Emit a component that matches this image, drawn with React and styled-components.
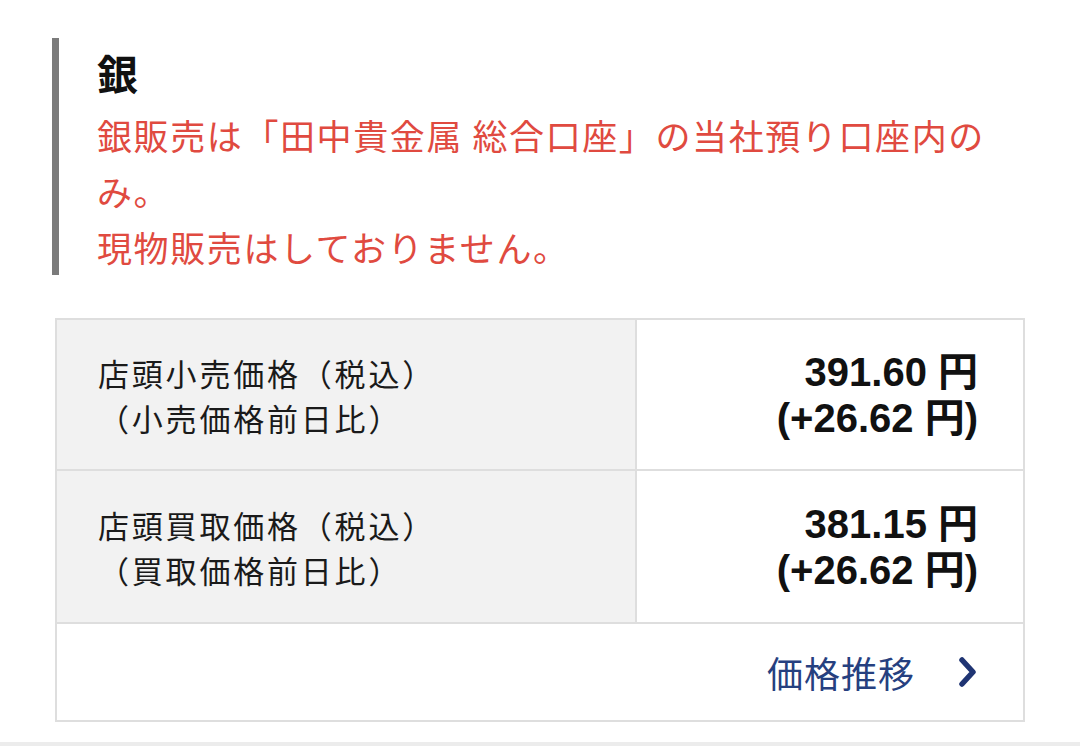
import React from 'react';
import styled, { createGlobalStyle } from 'styled-components';

const GlobalStyle = createGlobalStyle`
  body {
    margin: 0;
    background: #ffffff;
    font-family: "Noto Sans CJK JP", "Liberation Sans", sans-serif;
  }
`;

const Page = styled.div`
  width: 1080px;
  padding: 38px 55px 0 52px;
  box-sizing: border-box;
`;

const Notice = styled.section`
  border-left: 7px solid #7b7b7b;
  padding: 9px 0 0 38px;
`;

const Metal = styled.h2`
  margin: 0 0 10px;
  font-size: 41px;
  line-height: 50px;
  font-weight: 700;
  color: #111;
`;

const Warning = styled.p`
  margin: 0;
  font-size: 35px;
  line-height: 56px;
  letter-spacing: 1.6px;
  color: #e04a40;
`;

const PriceTable = styled.div`
  margin-top: 43px;
  margin-left: 3px;
  border: 2px solid #dedede;
  display: grid;
  grid-template-columns: 580px 1fr;
`;

const Label = styled.div`
  background: #f2f2f2;
  height: ${(p) => p.h}px;
  display: flex;
  flex-direction: column;
  justify-content: center;
  padding-left: 41px;
  font-size: 31px;
  line-height: 45px;
  letter-spacing: 2.8px;
  color: #1a1a1a;
  border-right: 2px solid #dedede;
  border-bottom: 2px solid #dedede;
`;

const Value = styled.div`
  height: ${(p) => p.h}px;
  display: flex;
  flex-direction: column;
  align-items: flex-end;
  justify-content: center;
  padding-right: 45px;
  font-family: "Liberation Sans", "Noto Sans CJK JP", sans-serif;
  font-weight: 700;
  font-size: 40px;
  line-height: 46px;
  color: #111;
  border-bottom: 2px solid #dedede;
`;

const LinkRow = styled.a`
  grid-column: 1 / -1;
  height: 96px;
  display: flex;
  align-items: center;
  justify-content: flex-end;
  gap: 44px;
  padding-right: 46px;
  color: #26407f;
  font-size: 36px;
  letter-spacing: 1px;
  text-decoration: none;
`;

const Chevron = () => (
  <svg width="18" height="32" viewBox="0 0 18 32">
    <polyline points="3,4 14,16 3,28" fill="none" stroke="#1f3473" strokeWidth="5.5" strokeLinecap="round" strokeLinejoin="round" />
  </svg>
);

const Bottom = styled.div`
  margin-top: 20px;
  margin-left: -52px;
  width: 1080px;
  height: 8px;
  background: #ececec;
`;

const rows = [
  { label: ['店頭小売価格（税込）', '（小売価格前日比）'], value: '391.60 円', diff: '(+26.62 円)', h: 149 },
  { label: ['店頭買取価格（税込）', '（買取価格前日比）'], value: '381.15 円', diff: '(+26.62 円)', h: 151 },
];

export default function App() {
  return (
    <Page>
      <GlobalStyle />
      <Notice>
        <Metal>銀</Metal>
        <Warning>
          銀販売は「田中貴金属 総合口座」の当社預り口座内の<br />
          み。<br />
          現物販売はしておりません。
        </Warning>
      </Notice>
      <PriceTable>
        {rows.map((r) => (
          <React.Fragment key={r.value}>
            <Label h={r.h}>
              <span>{r.label[0]}</span>
              <span>{r.label[1]}</span>
            </Label>
            <Value h={r.h}>
              <span>{r.value}</span>
              <span>{r.diff}</span>
            </Value>
          </React.Fragment>
        ))}
        <LinkRow href="#">
          価格推移
          <Chevron />
        </LinkRow>
      </PriceTable>
      <Bottom />
    </Page>
  );
}
